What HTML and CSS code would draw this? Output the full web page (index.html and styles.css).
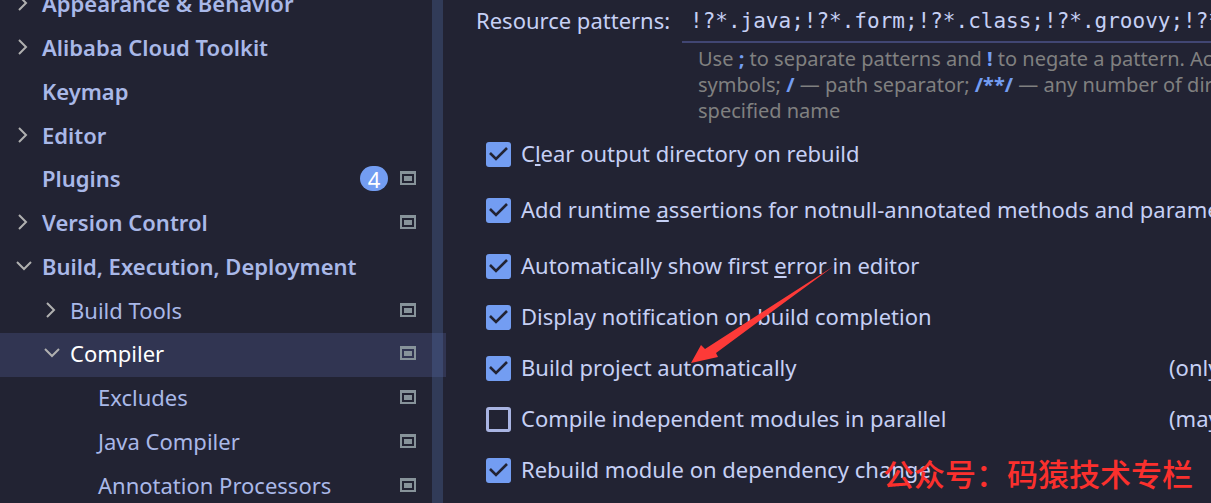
FILE: index.html
```html
<!DOCTYPE html>
<html lang="en">
<head>
<meta charset="utf-8">
<title>Settings - Compiler</title>
<link rel="stylesheet" href="styles.css">
</head>
<body>
<svg class="sprite" aria-hidden="true">
  <symbol id="right" viewBox="0 0 18 18"><path d="M5 2l7 7-7 7" fill="none" stroke="#b0b0b0" stroke-width="2"/></symbol>
  <symbol id="down" viewBox="0 0 18 18"><path d="M3 5l7 7 7-7" fill="none" stroke="#b0b0b0" stroke-width="2"/></symbol>
  <symbol id="project" viewBox="0 0 16 14"><path d="M0 0h16v14H0zM2 3v9h12V3z" fill="#87939a" fill-rule="evenodd"/><path d="M4 5h8v5H4z" fill="#87939a"/></symbol>
</svg>
<div class="window">
  <nav class="sidebar">
    <ul class="tree">
      <li class="row top"><svg class="arrow"><use href="#right"/></svg><span class="name">Appearance &amp; Behavior</span></li>
      <li class="row top"><svg class="arrow"><use href="#right"/></svg><span class="name">Alibaba Cloud Toolkit</span></li>
      <li class="row top"><span class="arrow"></span><span class="name">Keymap</span></li>
      <li class="row top"><svg class="arrow"><use href="#right"/></svg><span class="name">Editor</span></li>
      <li class="row top"><span class="arrow"></span><span class="name">Plugins</span><span class="badge">4</span><svg class="scope"><use href="#project"/></svg></li>
      <li class="row top"><svg class="arrow"><use href="#right"/></svg><span class="name">Version Control</span><svg class="scope"><use href="#project"/></svg></li>
      <li class="row top"><svg class="arrow"><use href="#down"/></svg><span class="name">Build, Execution, Deployment</span></li>
      <li class="row second"><svg class="arrow"><use href="#right"/></svg><span class="name">Build Tools</span><svg class="scope"><use href="#project"/></svg></li>
      <li class="row second selected"><svg class="arrow"><use href="#down"/></svg><span class="name">Compiler</span><svg class="scope"><use href="#project"/></svg></li>
      <li class="row third"><span class="arrow"></span><span class="name">Excludes</span><svg class="scope"><use href="#project"/></svg></li>
      <li class="row third"><span class="arrow"></span><span class="name">Java Compiler</span><svg class="scope"><use href="#project"/></svg></li>
      <li class="row third"><span class="arrow"></span><span class="name">Annotation Processors</span><svg class="scope"><use href="#project"/></svg></li>
    </ul>
    <div class="scrollbar"></div>
  </nav>
  <main class="content">
    <div class="field">
      <label class="field-label" for="patterns">Resource patterns:</label>
      <input class="patterns" id="patterns" type="text" value="!?*.java;!?*.form;!?*.class;!?*.groovy;!?*.scala;!?*.flex;!?*.kt;!?*.clj">
    </div>
    <p class="help">Use <b>;</b> to separate patterns and <b>!</b> to negate a pattern. Accepted wildcards:<br>symbols; <b>/</b> — path separator; <b>/**/</b> — any number of directories;<br>specified name</p>
    <div class="options">
      <div class="option spaced"><label class="choice"><input class="box" type="checkbox" checked><span class="caption">C<u>l</u>ear output directory on rebuild</span></label></div>
      <div class="option spaced"><label class="choice"><input class="box" type="checkbox" checked><span class="caption">Add runtime <u>a</u>ssertions for notnull-annotated methods and parameters</span></label></div>
      <div class="option"><label class="choice"><input class="box" type="checkbox" checked><span class="caption">Automatically show first <u>e</u>rror in editor</span></label></div>
      <div class="option"><label class="choice"><input class="box" type="checkbox" checked><span class="caption">Display notification on build completion</span></label></div>
      <div class="option"><label class="choice"><input class="box" type="checkbox" checked><span class="caption">Build project automatically</span></label><span class="caption">(only works while not running)</span></div>
      <div class="option"><label class="choice"><input class="box" type="checkbox"><span class="caption">Compile independent modules in parallel</span></label><span class="caption">(may require larger heap size)</span></div>
      <div class="option"><label class="choice"><input class="box" type="checkbox" checked><span class="caption">Rebuild module on dependency change</span></label></div>
    </div>
  </main>
  <svg class="pointer" viewBox="0 0 144 98" aria-hidden="true"><path d="M143 1L25 88l2 4-27 6 10-18 4 4z" fill="#fd3a38"/></svg>
  <div class="watermark" lang="zh-CN">公众号：码猿技术专栏</div>
</div>
</body>
</html>
```

FILE: styles.css
```css
* { box-sizing: border-box; }
body {
  margin: 0;
  background: #222333;
  color: #c6d0f5;
  font: 22px/30px "Noto Sans", "Open Sans", sans-serif;
}
.sprite { display: none; }
.window {
  position: relative;
  display: flex;
  height: 100vh;
  overflow: hidden;
}
.sidebar {
  position: relative;
  flex: none;
  width: 446px;
  overflow: hidden;
}
.tree {
  display: grid;
  grid-auto-rows: 44px 44px 44px 43px;
  margin: -17px 0 0;
  padding: 0;
  list-style: none;
  color: #a9b8e8;
}
.row {
  display: flex;
  align-items: center;
  padding: 0 30px 4px 14px;
}
.top { font-weight: 600; }
.second { padding-left: 42px; }
.third { padding-left: 70px; }
.selected { background: #313552; color: #fff; }
.arrow { flex: none; width: 18px; height: 18px; margin-right: 10px; }
.name { flex: 1; white-space: nowrap; }
.scope { flex: none; width: 16px; height: 14px; }
.badge {
  width: 28px;
  height: 25px;
  margin-right: 12px;
  border-radius: 13px;
  background: #739df2;
  color: #fff;
  font-weight: 400;
  line-height: 26px;
  text-align: center;
}
.scrollbar {
  position: absolute;
  top: 0;
  right: 3px;
  bottom: 0;
  width: 11px;
  background: rgba(83, 110, 165, 0.33);
}
.content {
  flex: 1;
  min-width: 0;
  overflow: hidden;
  padding-left: 30px;
  white-space: nowrap;
}
.field { display: flex; height: 43px; }
.field-label { flex: none; width: 206px; line-height: 40px; }
.patterns {
  flex: 1;
  min-width: 0;
  padding: 0 0 0 8px;
  border: 0;
  border-bottom: 2px solid #414673;
  background: none;
  color: inherit;
  font: 21px "DejaVu Sans Mono", monospace;
}
.help {
  margin: 3px 0 0 222px;
  color: #808080;
  font-size: 20px;
  line-height: 26px;
}
.help b { color: #739df2; }
.options { padding: 5px 0 0 10px; }
.option { display: flex; align-items: center; height: 51px; }
.spaced { margin-bottom: 5px; }
.choice { flex: none; display: flex; align-items: center; gap: 10px; min-width: 683px; }
.choice u { text-underline-offset: 2px; text-decoration-thickness: 2px; }
.caption { padding-bottom: 3px; }
.box {
  appearance: none;
  width: 25px;
  height: 25px;
  margin: 0;
  border: 3px solid #a9b4e2;
  border-radius: 3px;
}
.box:checked {
  border: 0;
  background: #739df2 url("data:image/svg+xml,%3Csvg xmlns='http://www.w3.org/2000/svg' viewBox='0 0 25 25'%3E%3Cpath d='M4 11l6 6L21 6' fill='none' stroke='%23222333' stroke-width='2.6'/%3E%3C/svg%3E");
}
.pointer {
  position: absolute;
  left: 691px;
  top: 265px;
  width: 144px;
  height: 98px;
}
.watermark {
  position: absolute;
  right: 18px;
  bottom: 7px;
  color: #fb302d;
  font: 500 31px/46px "Noto Sans CJK SC", sans-serif;
}
```
